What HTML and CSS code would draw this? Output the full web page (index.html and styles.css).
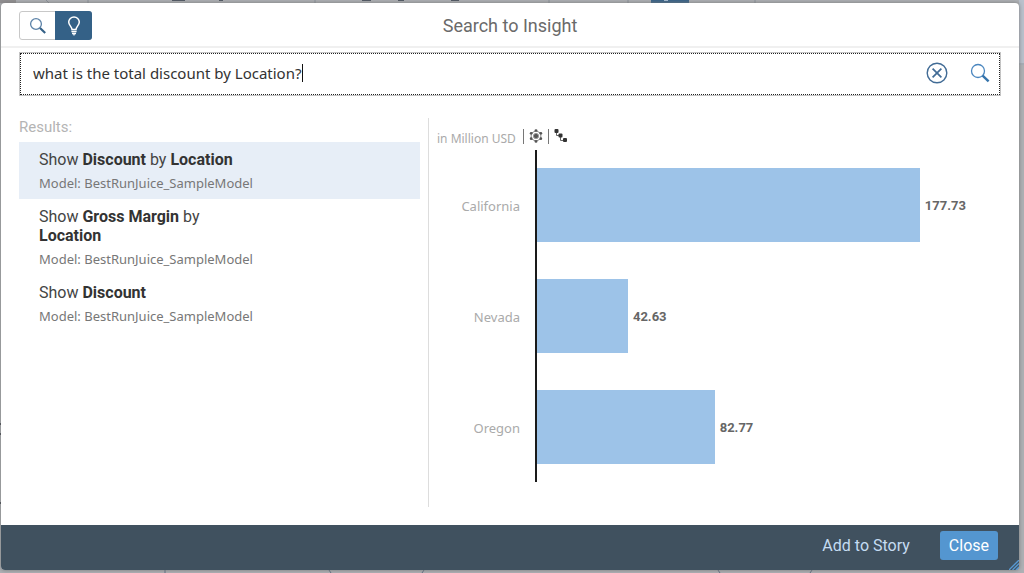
FILE: index.html
```html
<!DOCTYPE html>
<html lang="en">
<head>
<meta charset="utf-8">
<title>Search to Insight</title>
<link rel="stylesheet" href="styles.css">
</head>
<body>
<div class="workspace">
  <svg class="behind behind-top" width="1024" height="3" aria-hidden="true">
    <rect width="16" height="3" fill="#918f91"/>
    <path d="M46 0l3 3M88 0v3M315 0v3M549 0v3M628 0v3M755 0v3" stroke="#888f98" fill="none"/>
    <path d="M172 0h13M219 0h4M362 0h9M398 0h6M451 0h8" stroke="#4d5560" stroke-width="2"/>
    <rect x="651" width="38" height="3" fill="#346187"/>
    <rect x="664" width="4" height="1" fill="#a9c1d6"/>
  </svg>
  <svg class="behind behind-right" width="5" height="65" aria-hidden="true">
    <rect width="5" height="65" fill="#b9c1cc"/>
    <path d="M0 64h5" stroke="#9499a0"/>
  </svg>
  <svg class="behind behind-bottom" width="1024" height="3" aria-hidden="true">
    <path d="M165 0v3M329 0l2 3M424 0l-2 3M718 0l2 3M812 0l-2 3" stroke="#5b6b80" fill="none"/>
  </svg>
  <svg class="behind behind-left" width="1" height="84" aria-hidden="true">
    <path d="M0 4h1M0 14h1M0 83h1" stroke="#3a4048" stroke-width="2"/>
  </svg>

  <section class="dialog" role="dialog" aria-labelledby="dialog-title">
    <header class="dialog-header">
      <div class="mode-switch">
        <button class="mode" type="button" aria-label="Search">
          <svg width="18" height="18" viewBox="0 0 18 18" fill="none" stroke="#5d83a8">
            <circle cx="7" cy="7" r="5.4" stroke-width="1.3"/>
            <path d="M11 11l5.2 5" stroke="#346187" stroke-width="2.2"/>
          </svg>
        </button>
        <button class="mode mode-active" type="button" aria-label="Search to Insight" aria-pressed="true">
          <svg width="14" height="20" viewBox="0 0 14 20" fill="none" stroke="#ffffff">
            <path d="M5 13.6C5 10.6 1.7 9.6 1.7 6.1a5.3 5.1 0 0 1 10.6 0C12.3 9.6 9 10.6 9 13.6z" stroke-width="1.5"/>
            <path d="M4.4 15.4h5.2M5 17.4h4" stroke-width="1.5"/>
            <path d="M6 18.8h2" stroke-width="1"/>
          </svg>
        </button>
      </div>
      <h1 class="dialog-title" id="dialog-title">Search to Insight</h1>
    </header>

    <div class="dialog-body">
      <form class="query">
        <input class="query-input" type="text" aria-label="Ask a question" value="what is the total discount by Location?">
        <span class="caret"></span>
        <button class="icon-button" type="button" aria-label="Clear">
          <svg width="22" height="22" viewBox="0 0 22 22" fill="none" stroke="#426c96">
            <circle cx="11" cy="11" r="9.8" stroke-width="1.4"/>
            <path d="M6.6 6.6l8.8 8.8M15.4 6.6l-8.8 8.8" stroke-width="1.7"/>
          </svg>
        </button>
        <button class="icon-button" type="button" aria-label="Search">
          <svg width="20" height="20" viewBox="0 0 20 20" fill="none" stroke="#4a86bf">
            <circle cx="8" cy="8" r="6.5" stroke-width="1.3"/>
            <path d="M12.6 12.6l6 5.8" stroke="#3674ab" stroke-width="2.4"/>
          </svg>
        </button>
      </form>

      <div class="content">
        <div class="results">
          <h2 class="results-heading">Results:</h2>
          <ul class="result-list">
            <li class="result result-selected">
              <p class="result-title">Show <b>Discount</b> by <b>Location</b></p>
              <p class="result-model">Model: BestRunJuice_SampleModel</p>
            </li>
            <li class="result">
              <p class="result-title">Show <b>Gross Margin</b> by <b>Location</b></p>
              <p class="result-model">Model: BestRunJuice_SampleModel</p>
            </li>
            <li class="result">
              <p class="result-title">Show <b>Discount</b></p>
              <p class="result-model">Model: BestRunJuice_SampleModel</p>
            </li>
          </ul>
        </div>

        <div class="chart">
          <div class="chart-header">
            <span class="unit">in Million USD</span>
            <span class="divider"></span>
            <svg width="14" height="14" viewBox="0 0 14 14" fill="none" stroke="#666666">
              <path d="M7 1.6l4.8 2.7v5.4L7 12.4 2.2 9.7V4.3z" stroke="#888888"/>
              <circle cx="7" cy="7" r="2.6" fill="#555555" stroke="#999999"/>
              <g fill="#555555" stroke="none">
                <circle cx="7" cy="1.6" r="1.4"/><circle cx="2.2" cy="4.3" r="1.4"/><circle cx="11.8" cy="4.3" r="1.4"/>
                <circle cx="2.2" cy="9.7" r="1.4"/><circle cx="11.8" cy="9.7" r="1.4"/><circle cx="7" cy="12.4" r="1.4"/>
              </g>
            </svg>
            <span class="divider"></span>
            <svg width="14" height="14" viewBox="0 0 14 14" fill="none" stroke="#666666">
              <path d="M2.5 3v3.500h4M6.500 7v4.500h4"/>
              <g fill="#333333" stroke="none">
                <rect x="0.500" y="0" width="4" height="4" rx="1"/>
                <rect x="4.500" y="4.500" width="4" height="4" rx="1"/>
                <rect x="9" y="9" width="4" height="4" rx="1"/>
              </g>
            </svg>
          </div>
          <div class="plot">
            <div class="row"><span class="category">California</span><div class="track"><span class="bar" style="width: 82.5%"></span><span class="value">177.73</span></div></div>
            <div class="row"><span class="category">Nevada</span><div class="track"><span class="bar" style="width: 19.6%"></span><span class="value">42.63</span></div></div>
            <div class="row"><span class="category">Oregon</span><div class="track"><span class="bar" style="width: 38.3%"></span><span class="value">82.77</span></div></div>
          </div>
        </div>
      </div>
    </div>

    <footer class="dialog-footer">
      <button class="footer-button" type="button">Add to Story</button>
      <button class="footer-button footer-primary" type="button">Close</button>
      <svg class="grip" width="10" height="10" viewBox="0 0 10 10" aria-hidden="true">
        <path d="M0 10L10 0M3.5 10L10 3.5M7 10l3-3" stroke="#5899d3" stroke-width="1.3"/>
      </svg>
    </footer>
  </section>
</div>
</body>
</html>
```
FILE: styles.css
```css
* { box-sizing: border-box; }

body {
  margin: 0;
  font-family: Roboto, "Liberation Sans", sans-serif;
  font-size: 16px;
  color: #333333;
}

h1, h2, p, ul { margin: 0; padding: 0; font-weight: 400; }
ul { list-style: none; }
svg { display: block; flex: none; }

button {
  display: flex;
  align-items: center;
  justify-content: center;
  padding: 0;
  border: 0;
  background: none;
  font: inherit;
}

.workspace {
  position: relative;
  display: flex;
  min-height: 100vh;
  padding: 3px 5px 3px 1px;
  background: #aeb1b5;
  overflow: hidden;
}

.behind { position: absolute; }
.behind-top { top: 0; left: 0; }
.behind-right { top: 0; right: 0; }
.behind-bottom { bottom: 0; left: 0; }
.behind-left { top: 420px; left: 0; }

.dialog {
  position: relative;
  flex: 1;
  display: flex;
  flex-direction: column;
  border-radius: 4px;
  background: #ffffff;
  box-shadow: 0 0 4px #777777;
}

.dialog-header {
  display: grid;
  grid-template-columns: 1fr auto 1fr;
  align-items: center;
  height: 45px;
  padding: 2px 18px 0;
  border-bottom: 2px solid #f0f0f0;
}

.dialog-title { font-size: 18px; line-height: 24px; color: #6a6a6a; }

.mode-switch {
  display: flex;
  justify-self: start;
  border: 1px solid #c8c8c8;
  border-radius: 3px;
}

.mode { width: 36px; height: 27px; }

.mode-active {
  margin: -1px;
  width: 37px;
  height: 29px;
  border-radius: 0 3px 3px 0;
  background: #346187;
}

.dialog-body {
  flex: 1;
  display: flex;
  flex-direction: column;
  padding: 4px 18px 18px;
}

.query {
  position: relative;
  display: flex;
  align-items: center;
  gap: 22px;
  height: 44px;
  padding: 0 10px 2px 12px;
  border: 1px solid #c4c4c4;
  outline: 1px dotted #222222;
  outline-offset: -2px;
}

.query-input {
  flex: 1;
  min-width: 0;
  padding: 0 1px;
  border: 0;
  outline: 0;
  background: none;
  font-family: "Noto Sans", sans-serif;
  font-size: 15px;
  line-height: 24px;
  color: #333333;
}

.caret {
  position: absolute;
  left: 282px;
  width: 1px;
  height: 18px;
  background: #111111;
}

.content {
  flex: 1;
  display: grid;
  grid-template-columns: 401px 1fr;
  gap: 8px;
  padding-top: 22px;
}

.results-heading { font-size: 15px; line-height: 19px; padding-bottom: 5px; color: #b4b4b4; }

.result { padding: 8px 20px 7px; }
.result-selected { background: #e7eef7; }
.result-title { max-width: 216px; line-height: 19px; color: #444444; }
.result-model {
  padding-top: 5px;
  font-family: "Noto Sans", sans-serif;
  font-size: 13px;
  line-height: 18px;
  color: #777777;
}

b { font-weight: 700; color: #333333; }

.chart {
  display: flex;
  flex-direction: column;
  padding-left: 8px;
  border-left: 1px solid #dddddd;
}

.chart-header {
  display: flex;
  align-items: center;
  gap: 5px;
  height: 32px;
  padding-top: 4px;
}

.unit {
  padding: 4px 2px 0 0;
  font-family: "Noto Sans", sans-serif;
  font-size: 12px;
  color: #aaaaaa;
}
.divider { width: 1px; height: 15px; background: #777777; }

.plot {
  flex: 1;
  display: grid;
  grid-template-rows: repeat(3, 1fr);
  margin-bottom: 25px;
}

.row {
  display: grid;
  grid-template-columns: 98px 1fr;
  align-items: center;
}

.category {
  padding: 2px 15px 0 0;
  text-align: right;
  font-family: "Noto Sans", sans-serif;
  font-size: 13px;
  color: #aaaaaa;
}

.track {
  display: flex;
  align-items: center;
  gap: 5px;
  height: 100%;
  border-left: 2px solid #1a1a1a;
}

.bar { height: 67%; background: #9dc3e8; }
.value { padding-top: 1px; font-size: 13px; font-weight: 700; color: #666666; }

.dialog-footer {
  position: relative;
  display: flex;
  justify-content: flex-end;
  align-items: center;
  gap: 13px;
  height: 45px;
  padding: 0 21px 4px;
  border-radius: 0 0 4px 4px;
  background: #40515f;
}

.footer-button {
  height: 29px;
  padding: 0 17px;
  color: #c5dcf2;
}

.footer-primary {
  padding: 0 9px;
  border-radius: 3px;
  background: #5496d0;
  color: #ffffff;
}

.grip { position: absolute; right: 0; bottom: 0; }
```
